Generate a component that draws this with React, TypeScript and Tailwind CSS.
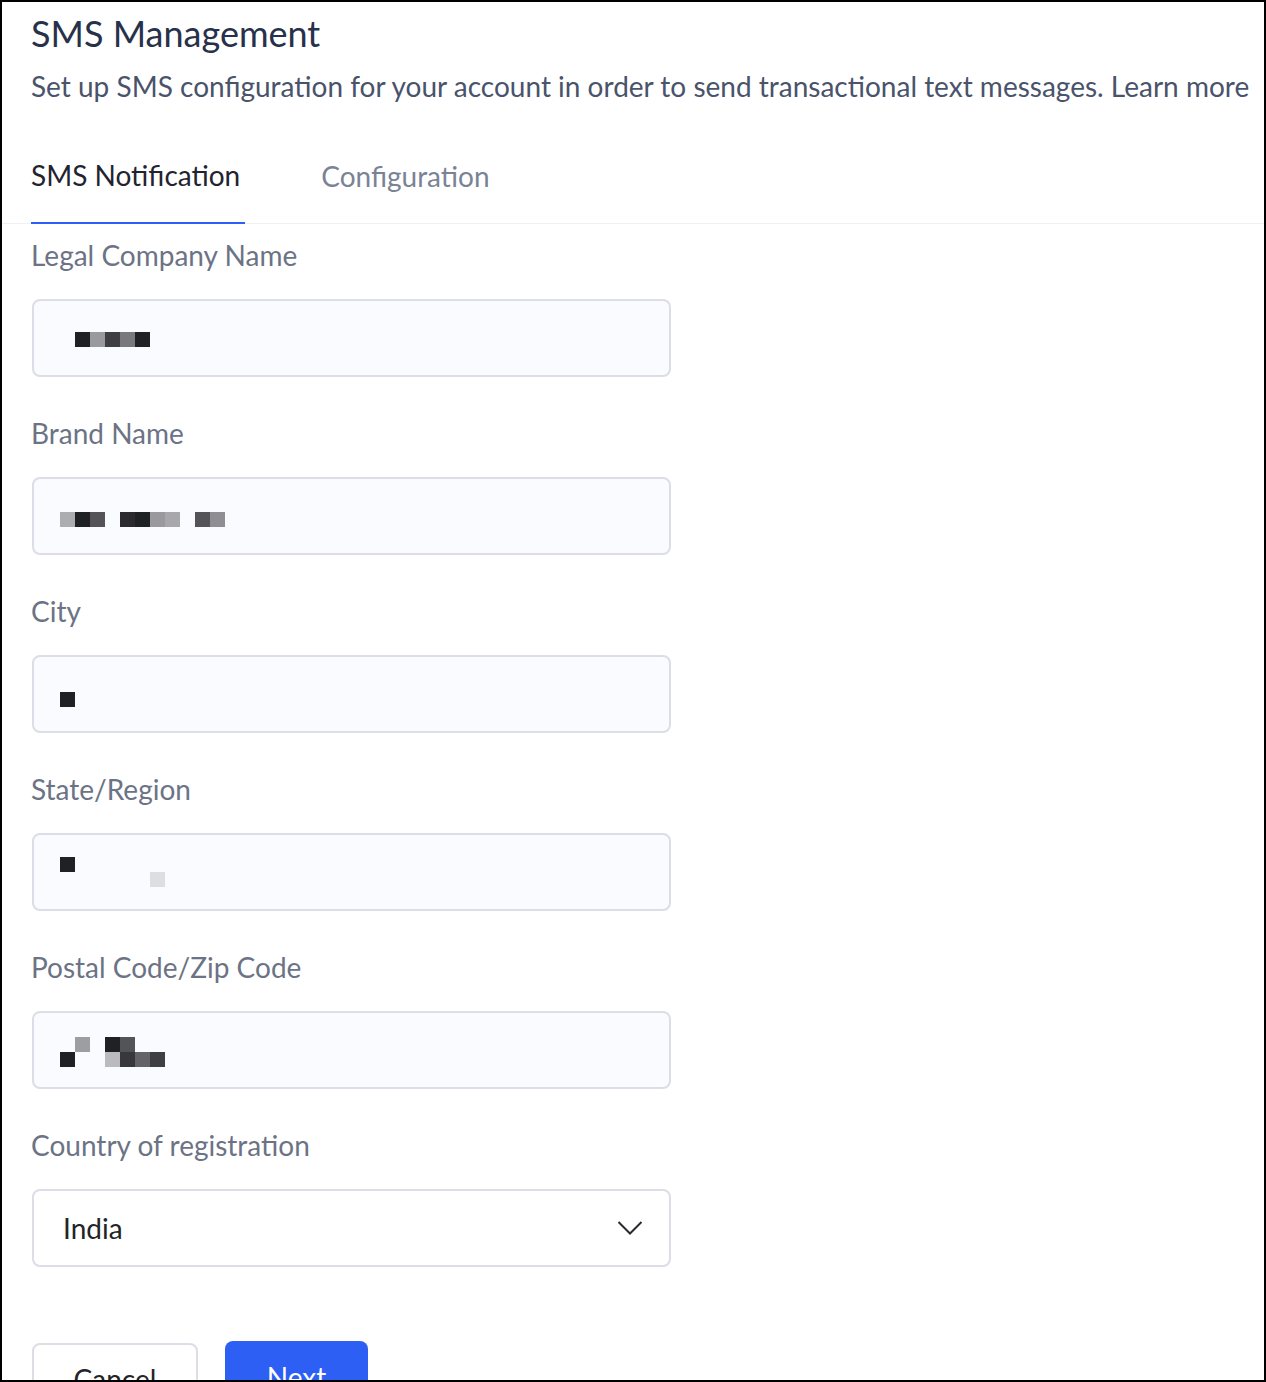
import React from 'react';

type Px = [number, number, string];

// pixelated (redacted) values, 15px blocks relative to the input box
const blurred: Record<string, Px[]> = {
  company: [[43, 33, '#202124'], [58, 33, '#9a9a9e'], [73, 33, '#3f3f43'], [88, 33, '#79797d'], [103, 33, '#202124']],
  brand: [
    [28, 35, '#adadb1'], [43, 35, '#202124'], [58, 35, '#545458'],
    [88, 35, '#2b2b2f'], [103, 35, '#202124'], [118, 35, '#9a9a9e'], [133, 35, '#a8a8ac'],
    [163, 35, '#545458'], [178, 35, '#8f8f93'],
  ],
  city: [[28, 37, '#202124']],
  state: [[28, 24, '#202124'], [118, 39, '#dedee2']],
  postal: [
    [43, 26, '#9e9ea2'], [73, 26, '#202124'], [88, 26, '#545458'],
    [28, 41, '#202124'], [73, 41, '#bbbbbf'], [88, 41, '#38383c'], [103, 41, '#646468'], [118, 41, '#3f3f43'],
  ],
};

function Field({ label, value }: { label: string; value: string }) {
  return (
    <div className="flex flex-col">
      <label className="text-[28px] leading-[34px] text-[#6b7385]">{label}</label>
      <div className="relative ml-px mt-[27px] h-[78px] w-[639px] rounded-[8px] border-2 border-[#dcdde6] bg-[#fafbff]">
        <svg className="absolute left-0 top-0" width="635" height="74">
          {blurred[value].map(([x, y, c], i) => (
            <rect key={i} x={x - 2} y={y - 2} width="15" height="15" fill={c} />
          ))}
        </svg>
      </div>
    </div>
  );
}

export default function App() {
  return (
    <div
      className="box-border h-[1382px] w-[1266px] overflow-hidden border-2 border-black bg-white"
      style={{ fontFamily: 'Lato, "Noto Sans", sans-serif' }}
    >
      <div className="px-[29px] pt-[10px]">
        <h1 className="text-[36px] leading-[43px] font-normal text-[#28314a]">SMS Management</h1>
        <p className="mt-[14px] text-[28px] leading-[34px] whitespace-nowrap text-[#49536b]">
          Set up SMS configuration for your account in order to send transactional text messages. Learn more
        </p>
      </div>

      <div className="mt-[55px] flex border-b border-[#eef0f4] pl-[29px]">
        <button className="-mb-px border-b-2 border-[#2d5ff5] pr-[5px] pb-[30px] text-left text-[28px] leading-[34px] text-[#1f2430]">
          SMS Notification
        </button>
        <button className="ml-[76px] pb-[30px] text-[28px] leading-[34px] text-[#7a8395]">Configuration</button>
      </div>

      <div className="flex flex-col gap-[39px] px-[29px] pt-[14px]">
        <Field label="Legal Company Name" value="company" />
        <Field label="Brand Name" value="brand" />
        <Field label="City" value="city" />
        <Field label="State/Region" value="state" />
        <Field label="Postal Code/Zip Code" value="postal" />

        <div className="flex flex-col">
          <label className="text-[28px] leading-[34px] text-[#6b7385]">Country of registration</label>
          <div className="ml-px mt-[27px] flex h-[78px] w-[639px] items-center justify-between rounded-[8px] border-2 border-[#dcdde6] bg-white pl-[29px] pr-[26px]">
            <span className="text-[28px] leading-[34px] text-[#222428]">India</span>
            <svg width="26" height="16" viewBox="0 0 26 16" fill="none">
              <path d="M1.5 2 L13 13.5 L24.5 2" stroke="#2a2b2e" strokeWidth="2" />
            </svg>
          </div>
        </div>
      </div>

      <div className="mt-[74px] flex items-start gap-[27px] pl-[30px]">
        <button className="mt-[2px] h-[78px] w-[166px] rounded-[8px] border-2 border-[#dcdde6] bg-white pb-[6px] text-[28px] text-[#222428]">
          Cancel
        </button>
        <button className="h-[78px] w-[143px] rounded-[8px] bg-[#2d5ff5] pb-[6px] text-[28px] text-white">Next</button>
      </div>
    </div>
  );
}
